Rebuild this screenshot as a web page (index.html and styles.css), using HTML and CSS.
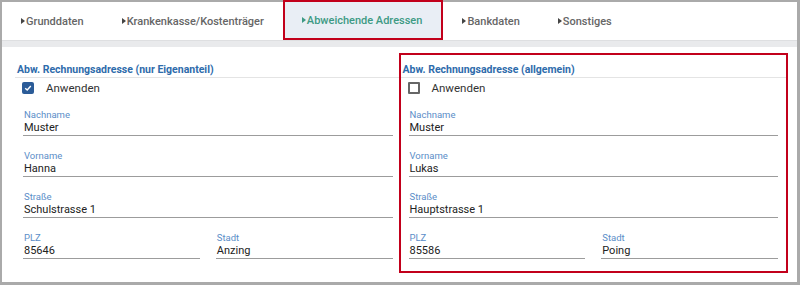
FILE: index.html
```html
<!DOCTYPE html>
<html lang="de">
<head>
  <meta charset="UTF-8" />
  <title>Abweichende Adressen</title>
  <link rel="stylesheet" href="styles.css">
</head>
<body>
  <div class="frame">
    <nav class="tabs">
      <div class="tab">Grunddaten</div>
      <div class="tab">Krankenkasse/Kostenträger</div>
      <div class="tab active">Abweichende Adressen</div>
      <div class="tab">Bankdaten</div>
      <div class="tab">Sonstiges</div>
    </nav>
    <div class="strip"></div>

    <div class="content">
      <!-- linke Spalte -->
      <section class="col">
        <h3 class="col-title">Abw. Rechnungsadresse (nur Eigenanteil)</h3>
        <div class="check">
          <span class="box checked">
            <svg width="8" height="8" viewBox="0 0 8 8"><path d="M1.2 4.2 L3.2 6 L6.8 2" fill="none" stroke="#fff" stroke-width="1.4"/></svg>
          </span>
          Anwenden
        </div>
        <div class="field"><span class="label">Nachname</span><span class="value">Muster</span></div>
        <div class="field"><span class="label">Vorname</span><span class="value">Hanna</span></div>
        <div class="field"><span class="label">Straße</span><span class="value">Schulstrasse 1</span></div>
        <div class="field-row">
          <div class="field"><span class="label">PLZ</span><span class="value">85646</span></div>
          <div class="field"><span class="label">Stadt</span><span class="value">Anzing</span></div>
        </div>
      </section>

      <!-- rechte Spalte (markiert) -->
      <section class="col marked">
        <h3 class="col-title">Abw. Rechnungsadresse (allgemein)</h3>
        <div class="check">
          <span class="box"></span>
          Anwenden
        </div>
        <div class="field"><span class="label">Nachname</span><span class="value">Muster</span></div>
        <div class="field"><span class="label">Vorname</span><span class="value">Lukas</span></div>
        <div class="field"><span class="label">Straße</span><span class="value">Hauptstrasse 1</span></div>
        <div class="field-row">
          <div class="field"><span class="label">PLZ</span><span class="value">85586</span></div>
          <div class="field"><span class="label">Stadt</span><span class="value">Poing</span></div>
        </div>
      </section>
    </div>
  </div>
</body>
</html>
```

FILE: styles.css
```css
body {
  margin: 0;
  font-family: Roboto, 'Liberation Sans', sans-serif;
  background: #fff;
}

.frame {
  height: 285px;
  box-sizing: border-box;
  border: solid #aaa;
  border-width: 2px 3px 3px 2px;
  background: #fff;
}

.tabs {
  display: flex;
  height: 38px;
}

.tab {
  display: flex;
  align-items: center;
  padding: 0 19px;
  font-size: 11px;
  font-weight: 500;
  color: #666;
}

.tab::before {
  content: "";
  border-left: 4px solid #444;
  border-top: 3px solid transparent;
  border-bottom: 3px solid transparent;
  margin-right: 1px;
}

.tab.active {
  margin-top: -2px;
  padding-right: 21px;
  background: #e9eef5;
  color: #3d9a84;
  outline: 2px solid #c2001b;
  outline-offset: -2px;
}

.tab.active::before {
  border-left-color: #3d9a84;
}

.strip {
  height: 6px;
  background: #e9eaec;
  border-top: 1px solid #dedfe1;
}

.content {
  display: flex;
  padding: 8px 11px 0 13px;
}

.col {
  flex: 1;
  padding: 8px 0 12px;
}

.col.marked {
  outline: 2px solid #c2001b;
}

.col-title {
  margin: 0;
  padding: 0 2px;
  font-size: 10.5px;
  font-weight: 700;
  line-height: 14px;
  color: #2e6bab;
  border-bottom: 1px solid #e4e4e4;
}

.check {
  display: flex;
  align-items: center;
  height: 20px;
  padding-left: 7px;
  font-size: 11.5px;
  color: #333;
}

.box {
  width: 12px;
  height: 12px;
  box-sizing: border-box;
  margin-right: 12px;
  border: 2px solid #666;
  border-radius: 1px;
}

.box.checked {
  display: flex;
  align-items: center;
  justify-content: center;
  border: none;
  border-radius: 2px;
  background: #2b5c98;
}

.field {
  margin: 11px 8px 0;
  padding-left: 1px;
  border-bottom: 1px solid #9c9c9c;
}

.field + .field,
.field-row {
  margin-top: 14px;
}

.label {
  display: block;
  font-size: 9.5px;
  line-height: 12px;
  color: #5b8ec8;
}

.value {
  display: block;
  font-size: 11px;
  line-height: 14px;
  color: #222;
}

.field-row {
  display: grid;
  grid-template-columns: 1fr 1fr;
  gap: 16px;
  margin-left: 8px;
  margin-right: 8px;
}

.field-row .field {
  margin: 0;
}
```
